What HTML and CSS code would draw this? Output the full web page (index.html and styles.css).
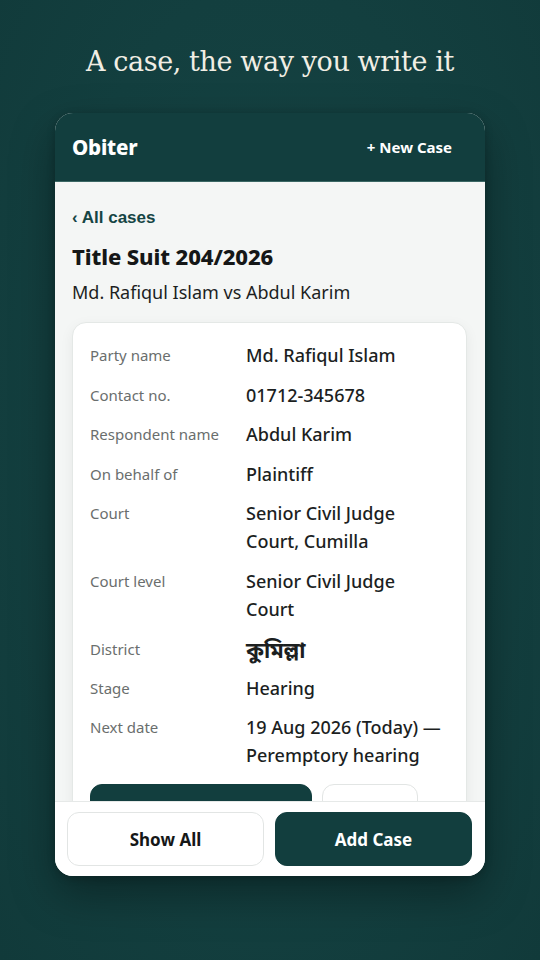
FILE: index.html
```html
<!DOCTYPE html>
<html lang="en">
<head>
<meta charset="utf-8">
<title>Obiter</title>
<link rel="stylesheet" href="styles.css">
</head>
<body>
<main class="screen">
  <h1 class="headline">A case, the way you write it</h1>
  <section class="phone">
    <header class="appbar">
      <span class="brand">Obiter</span>
      <span class="new-case">+ New Case</span>
    </header>
    <div class="content">
      <a class="back">‹ All cases</a>
      <h2 class="case-title">Title Suit 204/2026</h2>
      <p class="case-parties">Md. Rafiqul Islam vs Abdul Karim</p>
      <div class="details">
        <dl class="rows">
          <div class="row"><dt>Party name</dt><dd>Md. Rafiqul Islam</dd></div>
          <div class="row"><dt>Contact no.</dt><dd>01712-345678</dd></div>
          <div class="row"><dt>Respondent name</dt><dd>Abdul Karim</dd></div>
          <div class="row"><dt>On behalf of</dt><dd>Plaintiff</dd></div>
          <div class="row"><dt>Court</dt><dd>Senior Civil Judge Court, Cumilla</dd></div>
          <div class="row"><dt>Court level</dt><dd>Senior Civil Judge Court</dd></div>
          <div class="row row-bn"><dt>District</dt><dd class="bn">কুমিল্লা</dd></div>
          <div class="row"><dt>Stage</dt><dd>Hearing</dd></div>
          <div class="row"><dt>Next date</dt><dd>19 Aug 2026 (Today) — Peremptory hearing</dd></div>
        </dl>
        <div class="card-actions">
          <button class="btn btn-dark btn-wide" aria-label="Edit case"></button>
          <button class="btn btn-light btn-small" aria-label="Delete case"></button>
        </div>
      </div>
    </div>
    <footer class="bottombar">
      <button class="btn btn-light btn-bar">Show All</button>
      <button class="btn btn-dark btn-bar">Add Case</button>
    </footer>
  </section>
</main>
</body>
</html>
```
FILE: styles.css
```css
html, body {
  margin: 0;
  padding: 0;
}
body {
  width: 540px;
  height: 960px;
  overflow: hidden;
  background: radial-gradient(ellipse at 50% 45%, #164444 0%, #133f3f 60%, #113a3a 100%);
  font-family: "Noto Sans", "Open Sans", "Noto Sans Bengali", "Lohit Bengali", "FreeSans", sans-serif;
  color: #1c1f1f;
}
.screen {
  display: flex;
  flex-direction: column;
  align-items: center;
  padding-top: 42px;
}
.headline {
  margin: 0;
  font-family: "DejaVu Serif", Georgia, "Liberation Serif", serif;
  font-weight: 400;
  font-size: 27px;
  line-height: 40px;
  letter-spacing: -0.4px;
  color: #f1eee4;
  text-align: center;
}
.phone {
  margin-top: 31px;
  width: 430px;
  height: 763px;
  border-radius: 18px;
  overflow: hidden;
  display: flex;
  flex-direction: column;
  background: #f4f6f5;
  box-shadow: 0 18px 44px rgba(0, 0, 0, 0.35), 0 2px 8px rgba(0, 0, 0, 0.2);
}
.appbar {
  flex: 0 0 69px;
  box-sizing: border-box;
  display: flex;
  align-items: center;
  justify-content: space-between;
  padding: 0 33px 0 17px;
  background: #123e3e;
  border-bottom: 1px solid #3b6764;
  color: #ffffff;
}
.brand {
  font-weight: 800;
  font-size: 20.5px;
  letter-spacing: -0.2px;
}
.new-case {
  font-weight: 700;
  font-size: 15px;
}
.content {
  flex: 1 1 auto;
  overflow: hidden;
  padding: 26px 18px 0 17px;
  display: flex;
  flex-direction: column;
}
.back {
  font-family: "Liberation Sans", Arial, sans-serif;
  font-weight: 700;
  font-size: 17px;
  line-height: 20px;
  color: #154544;
}
.case-title {
  margin: 15px 0 0;
  font-weight: 800;
  font-size: 22px;
  line-height: 26px;
  letter-spacing: -0.1px;
  color: #151717;
}
.case-parties {
  margin: 10px 0 0;
  font-size: 18px;
  line-height: 26px;
  color: #1c1f1f;
}
.details {
  margin-top: 17px;
  flex: 0 0 auto;
  background: #ffffff;
  border: 1px solid #e4e8e6;
  border-radius: 14px;
  box-shadow: 0 4px 14px rgba(0, 0, 0, 0.06);
  padding: 18px 18px 20px 17px;
}
.rows {
  margin: 0;
  display: flex;
  flex-direction: column;
  gap: 11.5px;
}
.row {
  display: grid;
  grid-template-columns: 156px 1fr;
}
.row-bn {
  margin-top: 1px;
  margin-bottom: -1px;
}
.row dt {
  font-size: 15px;
  line-height: 28px;
  color: #6a6e6d;
}
.row dd {
  margin: 0;
  padding-right: 6px;
  font-size: 18px;
  line-height: 28px;
  font-weight: 500;
  color: #1c1f1f;
}
.row dd.bn {
  font-weight: 700;
  font-size: 22px;
}
.card-actions {
  margin-top: 15px;
  display: flex;
  gap: 10px;
}
.btn {
  font-family: inherit;
  font-weight: 700;
  font-size: 17px;
  border-radius: 12px;
  cursor: pointer;
}
.btn-dark {
  background: #123e3e;
  color: #ffffff;
  border: 1px solid #123e3e;
}
.btn-light {
  background: #ffffff;
  color: #151717;
  border: 1px solid #e2e5e4;
}
.btn-wide {
  width: 222px;
  height: 50px;
}
.btn-small {
  width: 96px;
  height: 50px;
}
.bottombar {
  flex: 0 0 74px;
  box-sizing: border-box;
  display: flex;
  gap: 11px;
  padding: 10px 13px 10px 12px;
  background: #ffffff;
  border-top: 1px solid #e6e9e8;
}
.btn-bar {
  flex: 1 1 0;
  height: 54px;
}
```
